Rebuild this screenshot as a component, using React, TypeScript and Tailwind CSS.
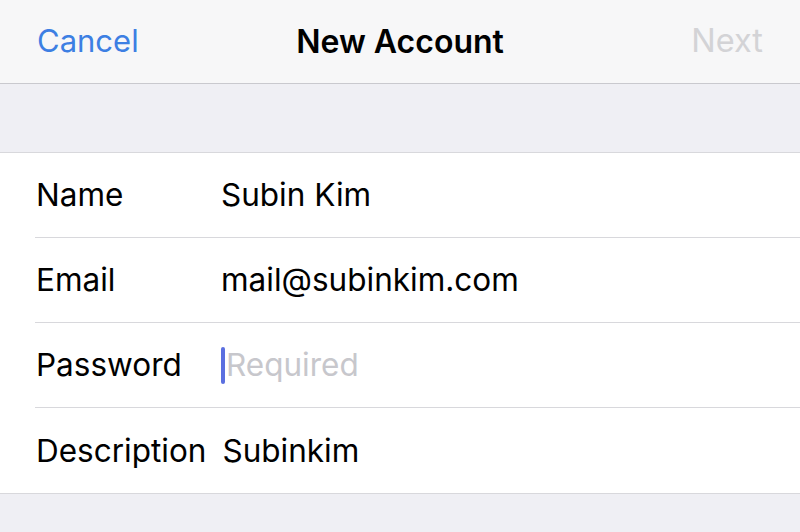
import React from "react";

const rows = [
  { label: "Name", value: "Subin Kim" },
  { label: "Email", value: "mail@subinkim.com" },
  { label: "Password", value: "", placeholder: "Required" },
  { label: "Description", value: "Subinkim" },
];

export default function App() {
  return (
    <div className="w-[800px] h-[532px] bg-[#efeff4] overflow-hidden" style={{ fontFamily: "Inter, 'Noto Sans', sans-serif" }}>
      <div className="h-[84px] bg-[#f7f7f8] border-b border-[#c9c9ce] flex items-center px-[37px]">
        <div className="flex-1">
          <span className="text-[31px] text-[#3d7fe3]">Cancel</span>
        </div>
        <span className="text-[32px] font-semibold text-black">New Account</span>
        <div className="flex-1 flex justify-end">
          <span className="text-[32.5px] text-[#d3d3d6]">Next</span>
        </div>
      </div>
      <div className="h-[68px]" />
      <div className="bg-white border-t border-b border-[#d8d8dc]">
        {rows.map((r, i) => (
          <div key={r.label} className={`flex items-center h-[85px] ml-[35px] ${i < rows.length - 1 ? "border-b border-[#d8d8dc]" : ""}`}>
            <span className="min-w-[186px] pl-[1px] pr-[16px] text-[31.5px] text-black whitespace-nowrap">{r.label}</span>
            {r.placeholder ? (
              <span className="flex items-center">
                <span className="w-[4px] h-[37px] bg-[#5b6fe0] rounded-full" />
                <span className="ml-[1px] text-[31.5px] text-[#c7c7cc]">{r.placeholder}</span>
              </span>
            ) : (
              <span className="text-[31.5px] text-black whitespace-nowrap">{r.value}</span>
            )}
          </div>
        ))}
      </div>
    </div>
  );
}
